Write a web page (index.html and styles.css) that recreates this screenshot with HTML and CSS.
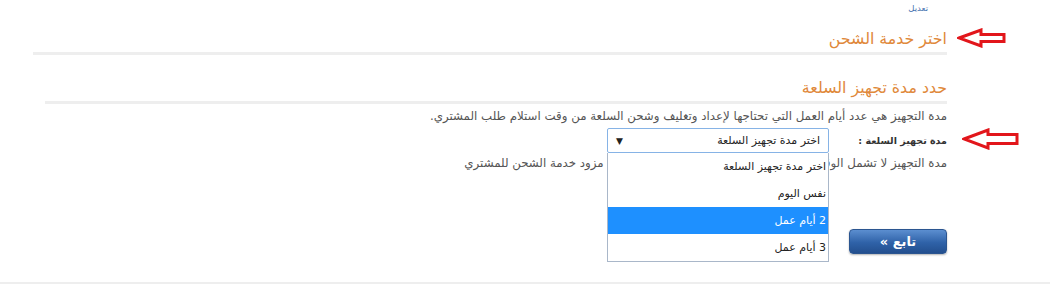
FILE: index.html
```html
<!DOCTYPE html>
<html lang="ar" dir="rtl">

<head>
  <meta charset="UTF-8" />
  <title>اختر خدمة الشحن</title>
  <link rel="stylesheet" href="styles.css">
</head>

<body>
  <div class="page">
    <div class="edit-link"><a href="#">تعديل</a></div>

    <div class="title-row">
      <h3 class="section-title">اختر خدمة الشحن</h3>
      <svg class="mark mark-1" width="50" height="20" viewBox="0 0 50 20">
        <path d="M2 10 L24 2 L24 6.5 L47 6.5 L47 13.5 L24 13.5 L24 18 Z" fill="#fff" stroke="#e2161b" stroke-width="3" stroke-linejoin="miter" />
      </svg>
    </div>

    <div class="title-row second">
      <h3 class="section-title">حدد مدة تجهيز السلعة</h3>
    </div>

    <p class="desc">مدة التجهيز هي عدد أيام العمل التي تحتاجها لإعداد وتغليف وشحن السلعة من وقت استلام طلب المشتري.</p>

    <div class="field-row">
      <label class="field-label">مدة تجهيز السلعة :</label>
      <div class="select">
        <span>اختر مدة تجهيز السلعة</span>
        <span class="caret">▼</span>
        <ul class="options">
          <li>اختر مدة تجهيز السلعة</li>
          <li>نفس اليوم</li>
          <li class="active">2 أيام عمل</li>
          <li>3 أيام عمل</li>
        </ul>
      </div>
      <svg class="mark mark-2" width="58" height="22" viewBox="0 0 58 22">
        <path d="M2 11 L26 2 L26 6.5 L55 6.5 L55 15.5 L26 15.5 L26 20 Z" fill="#fff" stroke="#e2161b" stroke-width="3" stroke-linejoin="miter" />
      </svg>
    </div>

    <p class="note">مدة التجهيز لا تشمل الوقت المطلوب لتوصيل وتسليم الشحنة من قبل مزود خدمة الشحن للمشتري</p>

    <div class="actions">
      <button class="next-btn">تابع »</button>
    </div>
  </div>
  <div class="bottom-line"></div>
</body>

</html>
```

FILE: styles.css
```css
body {
  margin: 0;
  background-color: #fff;
  color: #444;
  font-family: "DejaVu Sans", Tahoma, sans-serif;
  direction: rtl;
}

.page {
  height: 282px;
  padding: 0 103px 0 33px;
  box-sizing: border-box;
}

.edit-link {
  padding: 3px 19px 0 0;
  height: 13px;
  font-size: 8.5px;
  line-height: 11px;
}

.edit-link a {
  color: #3f6fae;
  text-decoration: none;
}

.title-row {
  position: relative;
  margin-top: 12px;
  border-bottom: 3px solid #eee;
}

.title-row.second {
  margin-top: 21px;
  margin-left: 12px;
}

.section-title {
  margin: 0;
  padding: 0 0 3px;
  color: #e0883a;
  font-size: 15.8px;
  font-weight: normal;
  line-height: 21px;
}

.title-row.second .section-title {
  padding-top: 1px;
}

.mark {
  position: absolute;
  display: block;
}

.mark-1 {
  left: 100%;
  top: 0;
  margin-left: 10px;
}

.mark-2 {
  left: 100%;
  top: 0;
  margin-left: 15px;
}

.desc {
  margin: 4px 0 0;
  font-size: 11.8px;
  line-height: 16px;
  color: #555;
}

.field-row {
  position: relative;
  display: flex;
  align-items: center;
  margin-top: 4px;
}

.field-label {
  width: 118px;
  font-size: 9.5px;
  font-weight: bold;
  color: #333;
}

.select {
  position: relative;
  display: flex;
  justify-content: space-between;
  align-items: center;
  width: 222px;
  height: 25px;
  padding: 0 8px 0 8px;
  box-sizing: border-box;
  border: 1px solid #86b3e6;
  border-radius: 2px;
  font-size: 11px;
  color: #222;
}

.caret {
  font-size: 9px;
}

.options {
  position: absolute;
  top: 24px;
  right: -1px;
  width: 222px;
  margin: 0;
  padding: 0;
  list-style: none;
  background-color: #fff;
  border: 1px solid #a9b7c9;
  border-top: none;
  box-sizing: border-box;
  z-index: 2;
}

.options li {
  height: 27px;
  line-height: 27px;
  padding-right: 2px;
  font-size: 11px;
  color: #222;
}

.options li.active {
  background-color: #1e90ff;
  color: #fff;
}

.note {
  margin: 2px 0 0;
  font-size: 11.8px;
  line-height: 16px;
  color: #555;
}

.actions {
  margin-top: 58px;
}

.next-btn {
  width: 98px;
  height: 25px;
  border: 1px solid #2b5590;
  border-radius: 4px;
  background: linear-gradient(#5b8ed0, #2f62a8 55%, #234f8e);
  box-shadow: 0 1px 2px rgba(0, 0, 0, 0.3);
  color: #fff;
  font-family: "DejaVu Sans", Tahoma, sans-serif;
  font-size: 13px;
  font-weight: bold;
  letter-spacing: 2px;
}

.bottom-line {
  height: 2px;
  background-color: #eee;
}
```
